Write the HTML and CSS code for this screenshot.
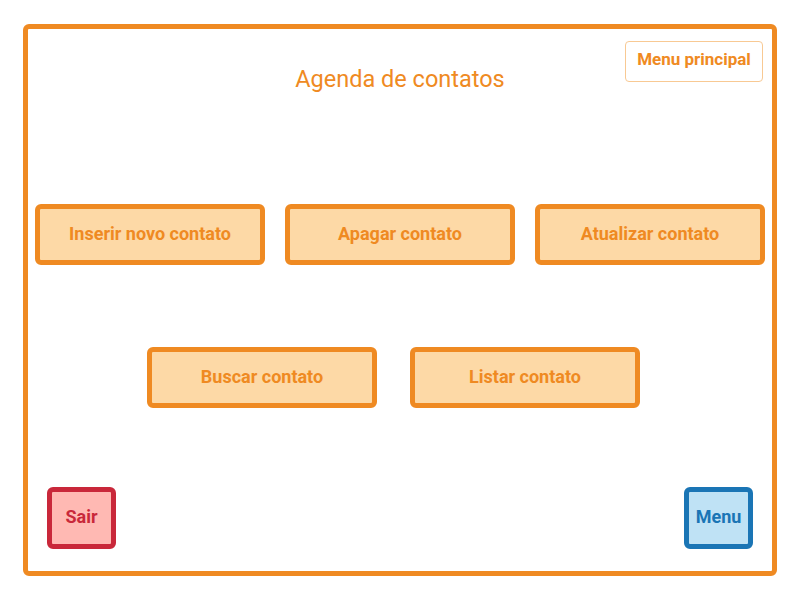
FILE: index.html
```html
<!DOCTYPE html>
<html lang="pt">
<head>
    <title>Agenda de contatos</title>
    <meta charset="UTF-8">
    <link rel="stylesheet" href="styles.css">
</head>

<body>
    <div class="frame">
        <div class="header">
            <div></div>
            <h1 class="title">Agenda de contatos</h1>
            <div class="header-right">
                <div class="btn-outline">Menu principal</div>
            </div>
        </div>

        <div class="row row1">
            <div class="btn">Inserir novo contato</div>
            <div class="btn">Apagar contato</div>
            <div class="btn">Atualizar contato</div>
        </div>

        <div class="row row2">
            <div class="btn">Buscar contato</div>
            <div class="btn">Listar contato</div>
        </div>

        <div class="footer">
            <div class="btn-small btn-red">Sair</div>
            <div class="btn-small btn-blue">Menu</div>
        </div>
    </div>
</body>
</html>
```

FILE: styles.css
```css
body {
    margin: 0;
    background-color: white;
    font-family: Roboto, "Liberation Sans", sans-serif;
}

.frame {
    box-sizing: border-box;
    margin: 24px 23px 0 23px;
    height: 552px;
    border: 5px solid #ef8a22;
    border-radius: 6px;
    padding: 12px 7px 22px 7px;
    display: flex;
    flex-direction: column;
}

.header {
    display: grid;
    grid-template-columns: 1fr auto 1fr;
    align-items: start;
}

.title {
    margin: 0;
    padding-top: 24px;
    font-size: 23.5px;
    font-weight: normal;
    line-height: 28px;
    color: #ef8a22;
    text-align: center;
}

.header-right {
    display: flex;
    justify-content: flex-end;
    padding-right: 2px;
}

.btn-outline {
    box-sizing: border-box;
    width: 138px;
    height: 41px;
    border: 1px solid #f8c993;
    border-radius: 4px;
    display: flex;
    align-items: center;
    justify-content: center;
    padding-bottom: 5px;
    font-size: 17px;
    font-weight: bold;
    color: #ef8a22;
}

.row {
    display: flex;
}

.row1 {
    margin-top: 111px;
    gap: 20px;
}

.row2 {
    margin-top: 82px;
    padding-left: 112px;
    gap: 33px;
}

.btn {
    box-sizing: border-box;
    width: 230px;
    height: 61px;
    border: 5px solid #ef8a22;
    border-radius: 6px;
    background: #fdd9a6;
    display: flex;
    align-items: center;
    justify-content: center;
    padding-bottom: 3px;
    font-size: 18px;
    font-weight: bold;
    color: #ef8a22;
}

.footer {
    margin-top: auto;
    padding: 0 12px;
    display: flex;
    justify-content: space-between;
}

.btn-small {
    box-sizing: border-box;
    width: 69px;
    height: 62px;
    border: 5px solid;
    border-radius: 6px;
    display: flex;
    align-items: center;
    justify-content: center;
    padding-bottom: 3px;
    font-size: 18px;
    font-weight: bold;
}

.btn-red {
    border-color: #c9283a;
    background: #ffb9b3;
    color: #c9283a;
}

.btn-blue {
    border-color: #1a75b5;
    background: #bfe2f5;
    color: #1a75b5;
}
```
